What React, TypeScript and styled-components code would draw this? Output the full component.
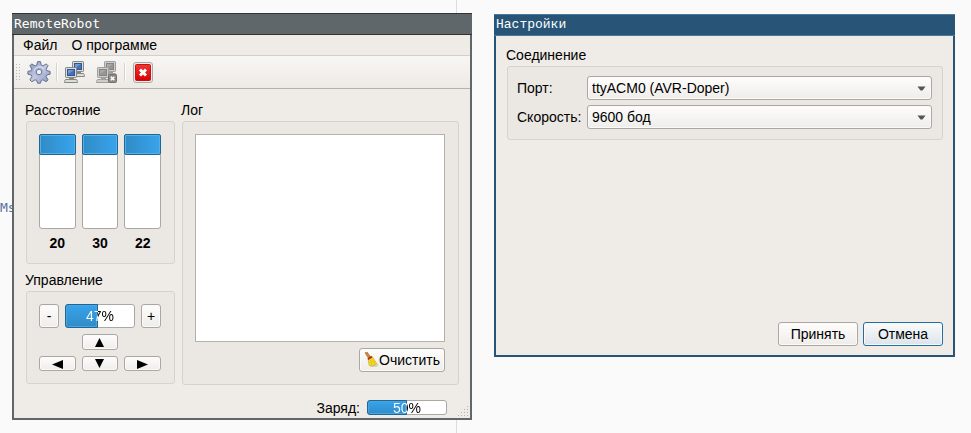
import React, { useState } from "react";
import styled, { createGlobalStyle, css } from "styled-components";

const GlobalStyle = createGlobalStyle`
  *, *::before, *::after { box-sizing: border-box; }
  body {
    margin: 0;
    background: #fafafa;
    color: #000;
    font: 14px/16px "Liberation Sans", Arial, sans-serif;
  }
  button, select, textarea { font: inherit; color: inherit; margin: 0; }
`;

const Desktop = styled.main`
  position: relative;
  display: grid;
  grid-template-columns: 460fr 461fr;
  align-items: start;
  column-gap: 22px;
  min-height: 100vh;
  padding: 13px 16px 13px 12px;
  overflow: hidden;
`;

const MarginRule = styled.div`
  position: absolute;
  top: 0;
  bottom: 0;
  left: 456px;
  width: 1px;
  background: #dcdcdc;
`;

const BackgroundText = styled.span`
  position: absolute;
  top: 200px;
  left: 0;
  color: #5673a3;
  font: 13px/16px "DejaVu Sans Mono", monospace;
`;

const Window = styled.section<{ $active?: boolean }>`
  position: relative;
  display: flex;
  flex-direction: column;
  min-width: 0;
  margin-top: ${(p) => (p.$active ? 1 : 0)}px;
  border: 2px solid ${(p) => (p.$active ? "#285577" : "#5f676a")};
  border-top-width: 0;
  background: #efebe7;
`;

const TitleBar = styled.h1<{ $active?: boolean }>`
  height: 22px;
  margin: 0 -2px;
  padding: 0 2px;
  border: solid ${(p) => (p.$active ? "#4c7899" : "#333")};
  border-width: 1px 0;
  background: ${(p) => (p.$active ? "#285577" : "#5f676a")};
  color: #fff;
  font: 13px/19px ${(p) => (p.$active ? '"Liberation Mono"' : '"DejaVu Sans Mono"')}, monospace;
`;

const MenuBar = styled.nav`
  display: flex;
  gap: 14px;
  height: 21px;
  padding: 0 9px;
  border-bottom: 1px solid #d3cfcb;
`;

const MenuItem = styled.button`
  padding: 0;
  border: 0;
  background: none;
  line-height: 20px;
`;

const ToolBar = styled.div`
  display: flex;
  align-items: center;
  height: 33px;
  padding-left: 2px;
  border-bottom: 1px solid #b5b2ae;
  background: linear-gradient(#f8f6f3, #edeae6);
`;

const Handle = styled.svg`
  margin-right: 5px;
`;

const ToolButton = styled.button`
  display: grid;
  place-items: center;
  width: 24px;
  height: 24px;
  padding: 0;
  border: 0;
  background: none;
`;

const ToolGroup = styled.div`
  display: flex;
  gap: 8px;
`;

const ToolSeparator = styled.span`
  width: 2px;
  height: 18px;
  margin: 0 5px;
  border-left: 1px solid #d6d3cf;
  border-right: 1px solid #fff;
`;

const MainBody = styled.div`
  display: grid;
  grid-template-columns: 149px 1fr;
  column-gap: 7px;
  padding: 11px 11px 0 12px;
`;

const SideColumn = styled.div`
  display: flex;
  flex-direction: column;
  gap: 6px;
`;

const Group = styled.fieldset`
  display: flex;
  flex-direction: column;
  flex: 1;
  min-width: 0;
  margin: 0;
  padding: 0;
  border: 0;
`;

const GroupTitle = styled.legend`
  height: 21px;
  margin-left: -1px;
  padding: 0;
  line-height: 20px;
`;

const Frame = styled.div`
  display: flex;
  flex-direction: column;
  padding: 12px 13px 12px 12px;
  border: 1px solid #d6d2ce;
  border-radius: 3px;
  background: #ebe7e3;
`;

const FormFrame = styled(Frame)`
  padding: 9px 10px 10px 9px;
`;

const Meters = styled.div`
  display: grid;
  grid-template-columns: repeat(3, 1fr);
  gap: 6px;
`;

const Meter = styled.div`
  display: flex;
  flex-direction: column;
  gap: 6px;
`;

const MeterTrack = styled.div`
  height: 95px;
  border: 1px solid #aaa7a4;
  border-radius: 3px;
  background: #fff;
`;

const MeterFill = styled.div`
  height: 21px;
  margin: -1px -1px 0;
  border: 1px solid #1f6692;
  border-radius: 2px;
  background: linear-gradient(90deg, #308cc6, #38a3ec);
  box-shadow: inset 0 0 0 1px #57afe6;
`;

const MeterValue = styled.output`
  height: 16px;
  font-weight: bold;
  text-align: center;
`;

const Track = styled.div<{ $height: number }>`
  flex: 1;
  height: ${(p) => p.$height}px;
  border: 1px solid #aaa7a4;
  border-radius: 3px;
  background: #fff;
`;

const Fill = styled.div`
  height: calc(100% + 2px);
  margin: -1px;
  border: 1px solid #1f6692;
  border-radius: 3px 0 0 3px;
  background: linear-gradient(#38a3ec, #308cc6);
  box-shadow: inset 0 0 0 1px #48a5df;
`;

const ProgressBox = styled.div<{ $width?: number }>`
  display: grid;
  flex: ${(p) => (p.$width ? `0 0 ${p.$width}px` : "1")};
  > * { grid-area: 1 / 1; }
`;

const ProgressText = styled.span<{ $value: number }>`
  align-self: center;
  z-index: 1;
  text-align: center;
  background: linear-gradient(90deg, #fff ${(p) => p.$value}%, #000 ${(p) => p.$value}%);
  background-clip: text;
  -webkit-text-fill-color: transparent;
`;

const raised = css`
  border: 1px solid #aaa7a4;
  border-radius: 3px;
  background: linear-gradient(#fdfdfc, #efedea);
  box-shadow: inset 0 0 0 1px #fbfaf9;
`;

const Button = styled.button<{ $focused?: boolean }>`
  ${raised}
  display: flex;
  align-items: center;
  justify-content: center;
  height: 24px;
  padding: 0 4px;
  ${(p) =>
    p.$focused &&
    css`
      border-color: #1f6fa5;
      background: linear-gradient(#fafbfc, #dce4ea);
    `}
`;

const StepButton = styled(Button)`
  width: 20px;
  padding: 0;
`;

const ControlRow = styled.div`
  display: flex;
  gap: 6px;
  margin-bottom: 6px;
`;

const ArrowPad = styled.div`
  display: grid;
  grid-template-columns: repeat(3, 1fr);
  gap: 6px;
`;

const ArrowButton = styled(Button)<{ $top?: boolean }>`
  height: ${(p) => (p.$top ? 16 : 15)}px;
  padding: 0;
  ${(p) => (p.$top ? "grid-column: 2;" : "grid-row: 2;")}
`;

const LogFrame = styled(Frame)`
  flex: 1;
  gap: 6px;
`;

const LogText = styled.textarea`
  display: block;
  width: 100%;
  height: 208px;
  padding: 4px;
  border: 1px solid #b5b2ae;
  outline: 0;
  background: #fff;
  resize: none;
`;

const ClearButton = styled(Button)`
  align-self: flex-end;
`;

const StatusBar = styled.footer`
  display: flex;
  align-items: center;
  justify-content: flex-end;
  gap: 7px;
  height: 33px;
  padding: 12px 23px 0 0;
`;

const SizeGrip = styled.svg`
  position: absolute;
  right: 1px;
  bottom: 1px;
`;

const DialogBody = styled.div`
  display: flex;
  flex-direction: column;
  justify-content: space-between;
  min-height: 319px;
  padding: 9px 10px 9px 11px;
`;

const DialogTop = styled.div`
  display: flex;
`;

const Fields = styled.div`
  display: grid;
  grid-template-columns: 65px 1fr;
  align-items: center;
  gap: 5px;
`;

const SelectBox = styled.div`
  display: grid;
  align-items: center;
  > * { grid-area: 1 / 1; }
  > svg { justify-self: end; margin-right: 6px; pointer-events: none; z-index: 1; }
`;

const Select = styled.select`
  ${raised}
  appearance: none;
  width: 100%;
  height: 24px;
  padding: 0 24px 0 4px;
  outline: 0;
`;

const DialogActions = styled.div`
  display: flex;
  justify-content: flex-end;
  gap: 5px;
  > button { width: 80px; }
`;

const GearIcon = () => (
  <svg width="24" height="24" viewBox="0 0 24 24" aria-hidden="true">
    <defs>
      <linearGradient id="gear" x1="0" y1="0" x2="1" y2="1">
        <stop offset="0" stopColor="#7f91bb" />
        <stop offset=".5" stopColor="#c3c9e2" />
        <stop offset="1" stopColor="#8493bd" />
      </linearGradient>
    </defs>
    <path
      d="M10.6 1.600h2.800l.9 3.600 1.600.7 3.400-2 1.800 1.800-2 3.400.7 1.600 3.300.7v2.800l-3.300.8-.7 1.600 2 3.300-1.900 1.900-3.300-2-1.600.7-.9 2.700h-2.800l-.9-2.700-1.600-.7-3.300 2-1.900-1.900 2-3.300-.7-1.600-3.300-.8v-2.800l3.300-.7.7-1.600-2-3.400 1.800-1.800 3.400 2 1.600-.7z"
      fill="url(#gear)" stroke="#65718f" strokeLinejoin="round"
    />
    <path d="M7 11a5.400 5.400 0 0 1 9.500-2.300" fill="none" stroke="#dfe3f2" />
    <circle cx="12" cy="12" r="4" fill="#a5b0d2" />
    <circle cx="12" cy="12" r="2.700" fill="#f5f3ef" stroke="#707da2" />
  </svg>
);

const NetworkIcon = ({ off = false }: { off?: boolean }) => {
  const screen = off ? "#959595" : "#4670ba";
  const shine = off ? "#a9a9a9" : "#7798d0";
  const edge = off ? "#a19f9a" : "#858782";
  const shell = off ? "#cfcdca" : "#dcddd8";
  const Computer = ({ x, y }: { x: number; y: number }) => (
    <g transform={`translate(${x} ${y})`}>
      <path d="M1.500 12.500h11l1 2v1H.5v-1z" fill={shell} stroke={edge} />
      <path d="M5 10h5v2H5z" fill={edge} />
      <rect x="1.500" y=".5" width="11" height="10" rx=".7" fill={shell} stroke={edge} />
      <rect x="3.500" y="2.500" width="7" height="6" fill={screen} stroke={off ? "#858585" : "#2f569b"} />
      <path d="M4 3h6l-6 4z" fill={shine} />
    </g>
  );
  return (
    <svg width="24" height="24" viewBox="0 0 24 24" aria-hidden="true">
      <Computer x={8} y={1} />
      <Computer x={1} y={7} />
      {off && (
        <g>
          <rect x="13.500" y="14.500" width="8" height="8" rx="1" fill="#8b8a87" stroke="#73726f" />
          <path d="M15.800 16.800l3.500 3.500m0-3.500l-3.500 3.500" stroke="#fff" strokeWidth="1.600" />
        </g>
      )}
    </svg>
  );
};

const CloseIcon = () => (
  <svg width="24" height="24" viewBox="0 0 24 24" aria-hidden="true">
    <defs>
      <linearGradient id="close" x1="0" y1="0" x2="0" y2="1">
        <stop offset="0" stopColor="#ef3935" />
        <stop offset="1" stopColor="#d90000" />
      </linearGradient>
    </defs>
    <rect x="2.500" y="2.500" width="19" height="20" rx="2.500" fill="#eee" stroke="#aaa8a8" />
    <rect x="4.500" y="4.500" width="15" height="16" rx="1" fill="url(#close)" stroke="#cc1010" />
    <path d="M9 9.500l6 6m0-6l-6 6" stroke="#fff" strokeWidth="3" />
  </svg>
);

const BroomIcon = () => (
  <svg width="15" height="16" viewBox="0 0 15 16" aria-hidden="true">
    <ellipse cx="10" cy="13" rx="4.500" ry="2" fill="#d8d3ba" />
    <path d="M1 .8l2.300-.6L6.500 5 4.500 6.200z" fill="#c98b3a" stroke="#9a6424" strokeWidth=".6" />
    <path d="M4 7.200L8.200 4.500l4.500 7-1.500 1.300-3 1.300-3-.6z" fill="#f1da2c" stroke="#c9a81a" strokeWidth=".6" />
    <path d="M6.500 8l1.500 5M8 7l3 5" stroke="#d6b81a" strokeWidth=".7" />
    <path d="M3.400 6.400l4-2.600 1 1.600-4.100 2.600z" fill="#b52b23" />
  </svg>
);

const ChevronIcon = () => (
  <svg width="9" height="5" viewBox="0 0 9 5" aria-hidden="true">
    <path d="M.5.5h8l-3 4h-2z" fill="#565553" />
  </svg>
);

const arrowPaths = {
  up: "M5.500 2L10 11H1z",
  down: "M5.500 10L10 1H1z",
  left: "M0 6.500L11 2v9z",
  right: "M11 6.500L0 2v9z",
};

const ArrowIcon = ({ dir }: { dir: keyof typeof arrowPaths }) => (
  <svg width="11" height="12" viewBox="0 0 11 12" aria-hidden="true">
    <path d={arrowPaths[dir]} />
  </svg>
);

const Progress = ({ value, height, width, label }: { value: number; height: number; width?: number; label: string }) => (
  <ProgressBox $width={width} role="progressbar" aria-label={label} aria-valuenow={value} aria-valuemin={0} aria-valuemax={100}>
    <Track $height={height}>
      <Fill style={{ width: `calc(${value}% + 1px)` }} />
    </Track>
    <ProgressText $value={value}>{value}%</ProgressText>
  </ProgressBox>
);

const distances = [20, 30, 22];

export default function App() {
  const [speed, setSpeed] = useState(47);
  const [log, setLog] = useState("");

  return (
    <>
      <GlobalStyle />
      <Desktop>
        <MarginRule />
        <BackgroundText>Ms</BackgroundText>

        <Window>
          <TitleBar>RemoteRobot</TitleBar>
          <MenuBar>
            <MenuItem>Файл</MenuItem>
            <MenuItem>О программе</MenuItem>
          </MenuBar>
          <ToolBar>
            <Handle width="6" height="18" viewBox="0 0 6 18" aria-hidden="true">
              <path d="M.5 1v17M3.500 1v17" stroke="#bbb8b4" strokeDasharray="1 2" />
            </Handle>
            <ToolButton aria-label="Настройки"><GearIcon /></ToolButton>
            <ToolSeparator />
            <ToolGroup>
              <ToolButton aria-label="Подключить"><NetworkIcon /></ToolButton>
              <ToolButton aria-label="Отключить" disabled><NetworkIcon off /></ToolButton>
            </ToolGroup>
            <ToolSeparator />
            <ToolButton aria-label="Выход"><CloseIcon /></ToolButton>
          </ToolBar>

          <MainBody>
            <SideColumn>
              <Group>
                <GroupTitle>Расстояние</GroupTitle>
                <Frame>
                  <Meters>
                    {distances.map((d) => (
                      <Meter key={d}>
                        <MeterTrack><MeterFill /></MeterTrack>
                        <MeterValue>{d}</MeterValue>
                      </Meter>
                    ))}
                  </Meters>
                </Frame>
              </Group>
              <Group>
                <GroupTitle>Управление</GroupTitle>
                <Frame>
                  <ControlRow>
                    <StepButton onClick={() => setSpeed(Math.max(0, speed - 1))}>-</StepButton>
                    <Progress value={speed} height={24} label="Скорость движения" />
                    <StepButton onClick={() => setSpeed(Math.min(100, speed + 1))}>+</StepButton>
                  </ControlRow>
                  <ArrowPad>
                    <ArrowButton $top aria-label="Вперёд"><ArrowIcon dir="up" /></ArrowButton>
                    <ArrowButton aria-label="Влево"><ArrowIcon dir="left" /></ArrowButton>
                    <ArrowButton aria-label="Назад"><ArrowIcon dir="down" /></ArrowButton>
                    <ArrowButton aria-label="Вправо"><ArrowIcon dir="right" /></ArrowButton>
                  </ArrowPad>
                </Frame>
              </Group>
            </SideColumn>

            <Group>
              <GroupTitle>Лог</GroupTitle>
              <LogFrame>
                <LogText aria-label="Лог" value={log} onChange={(e) => setLog(e.target.value)} />
                <ClearButton onClick={() => setLog("")}>
                  <BroomIcon />
                  Очистить
                </ClearButton>
              </LogFrame>
            </Group>
          </MainBody>

          <StatusBar>
            <span>Заряд:</span>
            <Progress value={50} height={15} width={80} label="Заряд" />
          </StatusBar>
          <SizeGrip width="12" height="12" viewBox="0 0 12 12" aria-hidden="true">
            <path
              d="M10 1.500h1M7 4.500h1m2 0h1M4 7.500h1m2 0h1m2 0h1M1 10.500h1m2 0h1m2 0h1m2 0h1"
              stroke="#b5b2ae"
            />
          </SizeGrip>
        </Window>

        <Window $active>
          <TitleBar $active>Настройки</TitleBar>
          <DialogBody>
            <DialogTop>
              <Group>
                <GroupTitle>Соединение</GroupTitle>
                <FormFrame>
                  <Fields>
                    <label htmlFor="port">Порт:</label>
                    <SelectBox>
                      <Select id="port"><option>ttyACM0 (AVR-Doper)</option></Select>
                      <ChevronIcon />
                    </SelectBox>
                    <label htmlFor="speed">Скорость:</label>
                    <SelectBox>
                      <Select id="speed"><option>9600 бод</option></Select>
                      <ChevronIcon />
                    </SelectBox>
                  </Fields>
                </FormFrame>
              </Group>
            </DialogTop>
            <DialogActions>
              <Button>Принять</Button>
              <Button $focused>Отмена</Button>
            </DialogActions>
          </DialogBody>
        </Window>
      </Desktop>
    </>
  );
}
